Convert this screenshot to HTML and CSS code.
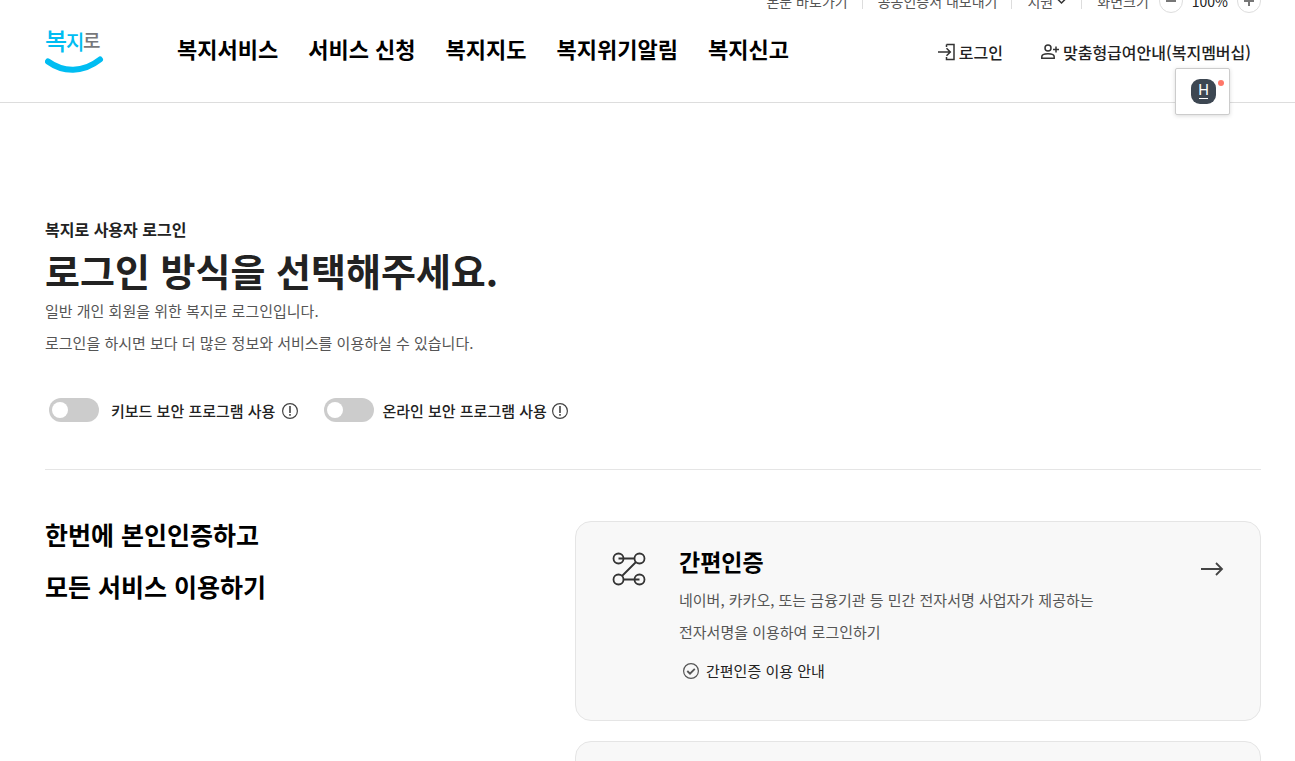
FILE: index.html
```html
<!DOCTYPE html>
<html lang="ko">
<head>
<meta charset="utf-8">
<title>복지로 로그인</title>
<link rel="stylesheet" href="styles.css">
</head>
<body>
<header class="header">
  <div class="utility">
    <a class="utility-item" href="#main">본문 바로가기</a>
    <a class="utility-item" href="#cert">공동인증서 내보내기</a>
    <button class="utility-item utility-menu" type="button">지원
      <svg width="11" height="8" viewBox="0 0 11 8" fill="none" stroke="#333" stroke-width="1.5"><path d="M1 1.500 5.500 6 10 1.500"/></svg>
    </button>
    <div class="utility-item zoom">
      <span class="zoom-label">화면크기</span>
      <button class="zoom-button" type="button" aria-label="축소"><svg width="12" height="12" viewBox="0 0 12 12" stroke="#777" stroke-width="2"><path d="M1 6h10"/></svg></button>
      <span class="zoom-value">100%</span>
      <button class="zoom-button" type="button" aria-label="확대"><svg width="12" height="12" viewBox="0 0 12 12" stroke="#777" stroke-width="2"><path d="M1 6h10M6 1v10"/></svg></button>
    </div>
  </div>
  <div class="header-main">
    <a class="logo" href="#home" aria-label="복지로">
      <svg width="60" height="54" viewBox="0 0 60 54">
        <text class="logo-text" x="0" y="29" font-size="24" fill="#00bdf2">복</text>
        <text class="logo-text" x="21" y="29" font-size="20" fill="#00bdf2">지</text>
        <text class="logo-text" x="38" y="27" font-size="19" fill="#77787b">로</text>
        <path d="M3 40.500C18 51.500 38 52 55 38.500" fill="none" stroke="#00bdf2" stroke-width="6" stroke-linecap="round"/>
      </svg>
    </a>
    <nav class="nav">
      <a href="#service">복지서비스</a>
      <a href="#apply">서비스 신청</a>
      <a href="#map">복지지도</a>
      <a href="#alert">복지위기알림</a>
      <a href="#report">복지신고</a>
    </nav>
    <div class="account">
      <a class="account-link" href="#login">
        <svg width="17" height="18" viewBox="0 0 17 18" fill="none" stroke="#333" stroke-width="1.500"><path d="M8.500 1.500H16v15H8.500V14M8.500 4V1.500M0 9h12M8.500 5.200 12.300 9l-3.800 3.800"/></svg>
        로그인
      </a>
      <a class="account-link" href="#membership">
        <svg width="18" height="16" viewBox="0 0 18 16" fill="none" stroke="#333" stroke-width="1.500"><circle cx="7" cy="4" r="3"/><path d="M.8 14.200v-1.500c0-1.800 2.800-3 6.200-3s6.200 1.200 6.200 3v1.500zM12 5.500h6M15 2.500v6"/></svg>
        맞춤형급여안내(복지멤버십)
      </a>
      <button class="helper" type="button" aria-label="도우미"><span class="helper-icon">H</span></button>
    </div>
  </div>
</header>
<main class="content" id="main">
  <section class="intro">
    <p class="eyebrow">복지로 사용자 로그인</p>
    <h1 class="title">로그인 방식을 선택해주세요.</h1>
    <p class="text">일반 개인 회원을 위한 복지로 로그인입니다.<br>로그인을 하시면 보다 더 많은 정보와 서비스를 이용하실 수 있습니다.</p>
    <div class="options">
      <div class="option option-keyboard">
        <input class="switch" type="checkbox" role="switch" id="keyboard"><label for="keyboard">키보드 보안 프로그램 사용</label>
        <button class="info" type="button" aria-label="키보드 보안 안내"><svg width="16" height="16" viewBox="0 0 16 16" fill="none" stroke="#444"><circle cx="8" cy="8" r="7.400" stroke-width="1.200"/><path d="M8 3v7M8 11v1.800" stroke-width="1.600"/></svg></button>
      </div>
      <div class="option">
        <input class="switch" type="checkbox" role="switch" id="online"><label for="online">온라인 보안 프로그램 사용</label>
        <button class="info" type="button" aria-label="온라인 보안 안내"><svg width="16" height="16" viewBox="0 0 16 16" fill="none" stroke="#444"><circle cx="8" cy="8" r="7.400" stroke-width="1.200"/><path d="M8 3v7M8 11v1.800" stroke-width="1.600"/></svg></button>
      </div>
    </div>
  </section>
  <section class="methods">
    <h2 class="methods-title">한번에 본인인증하고<br>모든 서비스 이용하기</h2>
    <div class="cards">
      <article class="card">
        <svg class="card-icon" width="34" height="34" viewBox="0 0 34 34" fill="none" stroke="#333" stroke-width="1.800"><circle cx="6.500" cy="6.500" r="5"/><circle cx="27.500" cy="6.500" r="5"/><circle cx="6.500" cy="27.500" r="5"/><circle cx="27.500" cy="27.500" r="5"/><path d="M6.500 6.500h16M24 10 10 24M11.500 27.500h16"/></svg>
        <div class="card-body">
          <h3 class="card-title">간편인증</h3>
          <p class="text">네이버, 카카오, 또는 금융기관 등 민간 전자서명 사업자가 제공하는<br>전자서명을 이용하여 로그인하기</p>
          <a class="guide" href="#guide">
            <svg width="16" height="16" viewBox="0 0 16 16" fill="none" stroke="#555"><circle cx="8" cy="8" r="7.400" stroke-width="1.200"/><path d="m4.300 8 2.700 2.700 4.800-4.900" stroke-width="1.800"/></svg>
            간편인증 이용 안내
          </a>
        </div>
        <a class="go" href="#simple" aria-label="간편인증 로그인"><svg width="24" height="14" viewBox="0 0 24 14" fill="none" stroke="#444" stroke-width="1.800"><path d="M1 7h21M16 1l6 6-6 6"/></svg></a>
      </article>
      <article class="card"></article>
    </div>
  </section>
</main>
</body>
</html>
```
FILE: styles.css
```css
* { box-sizing: border-box; }
body {
  margin: 0;
  height: 100vh;
  overflow: hidden;
  background: #fff;
  color: #222;
  font-family: "Noto Sans CJK KR", "Noto Sans", sans-serif;
  font-size: 15px;
}
h1, h2, h3, p { margin: 0; }
a { color: inherit; text-decoration: none; }
button { padding: 0; border: 0; background: none; color: inherit; font: inherit; }
svg { display: block; flex: none; }

.header {
  margin-top: -12px;
  padding: 0 34px 0 45px;
  height: 115px;
  border-bottom: 1px solid #ddd;
}
.utility {
  display: flex;
  justify-content: flex-end;
  align-items: center;
  height: 26px;
  font-size: 14px;
  line-height: 24px;
  color: #555;
}
.utility-item { display: flex; align-items: center; }
.utility-item + .utility-item::before {
  content: "";
  width: 1px;
  height: 16px;
  margin: 0 15px 0 14px;
  background: #ddd;
}
.utility-menu svg { margin-left: 3px; }
.zoom-button {
  display: grid;
  place-items: center;
  width: 24px;
  height: 24px;
  border: 1px solid #ddd;
  border-radius: 50%;
}
.zoom-label { margin-right: 10px; }
.zoom-value { margin: 0 9px; color: #222; }

.header-main { display: flex; align-items: center; height: 68px; }
.logo-text { font-weight: 500; }
.nav {
  display: flex;
  gap: 30px;
  margin-left: 72px;
  color: #000;
  font-size: 22px;
  font-weight: 700;
  line-height: 32px;
}
.account {
  position: relative;
  display: flex;
  gap: 38px;
  margin-left: auto;
  padding: 8px 10px 0 0;
  font-size: 16px;
  font-weight: 500;
  line-height: 24px;
}
.account-link { display: flex; align-items: center; gap: 4px; }
.helper {
  position: absolute;
  top: 36px;
  right: 31px;
  display: grid;
  place-items: center;
  width: 55px;
  height: 47px;
  padding-left: 2px;
  border: 1px solid #ccc;
  border-radius: 2px;
  background: #fff;
  box-shadow: 0 1px 4px rgba(0, 0, 0, .15);
}
.helper-icon {
  position: relative;
  width: 25px;
  height: 25px;
  border-radius: 9px;
  background: #3d4752;
  color: #fff;
  font: 15px/22px Roboto, sans-serif;
}
.helper-icon::before {
  content: "";
  position: absolute;
  left: 8px;
  bottom: 5px;
  width: 9px;
  height: 1px;
  background: #fff;
}
.helper-icon::after {
  content: "";
  position: absolute;
  top: 1px;
  right: -8px;
  width: 6px;
  height: 6px;
  border-radius: 50%;
  background: #ff7769;
}

.content { padding: 114px 34px 0 45px; }
.intro { padding-bottom: 47px; border-bottom: 1px solid #e5e5e5; }
.eyebrow { font-size: 16px; font-weight: 700; line-height: 24px; }
.title { margin: 2px 0 -2px; font-size: 38px; font-weight: 700; line-height: 54px; }
.text { color: #555; font-size: 15px; line-height: 32px; }
.options { display: flex; gap: 26px; margin-top: 39px; padding-left: 4px; }
.option { display: flex; align-items: center; gap: 8px; height: 24px; font-weight: 500; }
.option-keyboard { gap: 12px; }
.option .info { margin: 2px 0 0 -3px; }
.option-keyboard .info { margin-left: -5px; }
.switch {
  appearance: none;
  width: 50px;
  height: 24px;
  margin: 0;
  padding: 4px 3px;
  border-radius: 12px;
  background: #ccc;
}
.switch::before {
  content: "";
  display: block;
  width: 16px;
  height: 16px;
  border-radius: 50%;
  background: #fff;
}
.switch:checked { background: #00bdf2; }
.switch:checked::before { margin-left: auto; }

.methods {
  display: grid;
  grid-template-columns: 530px 1fr;
  padding-top: 51px;
}
.methods-title { margin-top: -13px; color: #000; font-size: 25px; font-weight: 700; line-height: 52px; }
.cards { display: grid; gap: 20px; }
.card {
  display: flex;
  align-items: flex-start;
  min-height: 200px;
  padding: 22px 36px;
  border: 1px solid #e5e5e5;
  border-radius: 16px;
  background: #f8f8f8;
}
.card-icon { margin-top: 8px; }
.card-body { flex: 1; margin-left: 33px; }
.card-title { color: #000; font-size: 23px; font-weight: 700; line-height: 34px; margin-bottom: 6px; }
.guide { display: flex; align-items: center; gap: 7px; margin-top: 11px; padding-left: 4px; line-height: 24px; }
.go { margin-top: 18px; }
```
